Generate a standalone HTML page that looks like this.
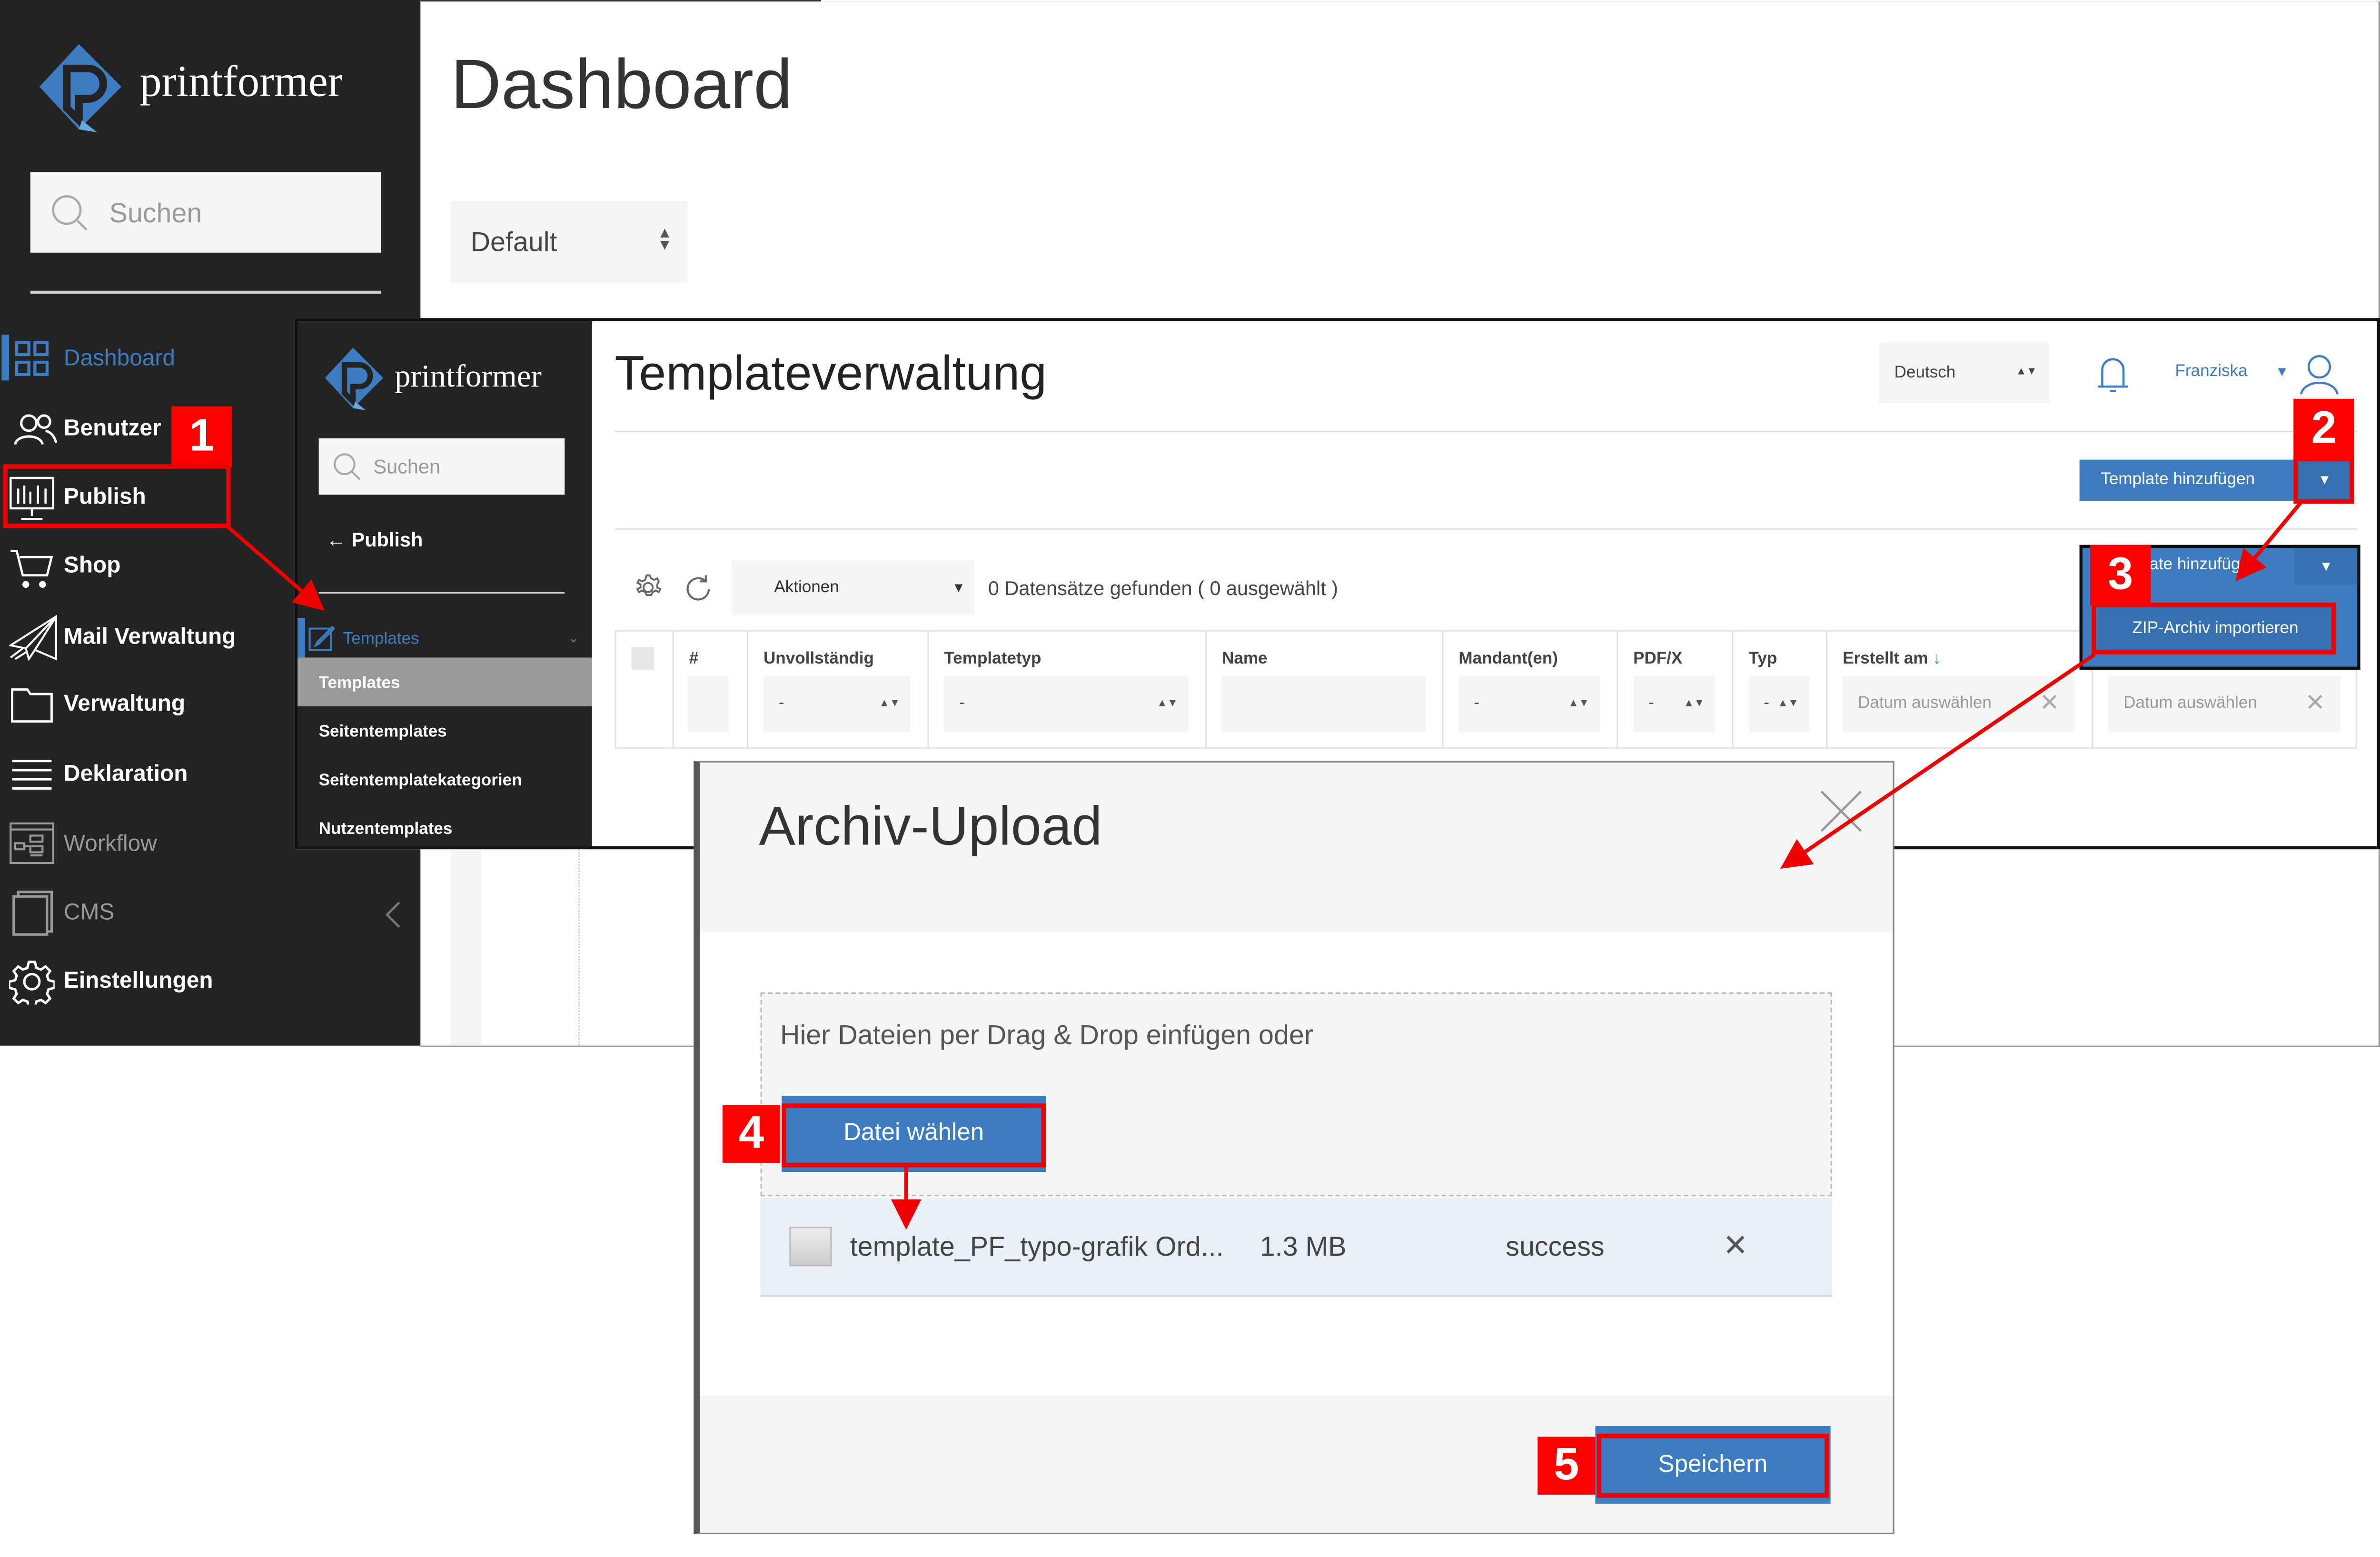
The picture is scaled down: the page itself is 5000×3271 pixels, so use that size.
<!DOCTYPE html>
<html><head><meta charset="utf-8"><style>
*{margin:0;padding:0;box-sizing:border-box}
html,body{width:5000px;height:3271px;overflow:hidden;background:#fff}
#s{position:absolute;left:0;top:0;width:1568px;height:1023px;transform:scale(3.1888,3.1975);transform-origin:0 0;font-family:"Liberation Sans",sans-serif;color:#333}
.a{position:absolute}
.dk{background:#232323}
.mi{position:absolute;left:42px;font-size:15px;font-weight:bold;color:#fff;line-height:20px}
.sm{position:absolute;left:210px;font-size:11px;font-weight:bold;color:#fff}
.lbl{position:absolute;background:#f00;color:#fff;font-weight:bold;font-size:30px;text-align:center;line-height:40px;width:40px;height:40px}
.rb{position:absolute;border:3px solid #e00}
.th{position:absolute;top:427px;font-size:11px;font-weight:bold;color:#444}
.fi{position:absolute;top:444px;height:37px;background:#f5f5f5;font-size:11px;color:#555;line-height:37px;padding-left:10px}
.blue{background:#3d7cc1;color:#fff}
</style></head><body><div id="s">
<!-- page 1 -->
<div class="a" style="left:277px;top:0;width:1291px;height:688px;border-right:1px solid #999;border-bottom:1px solid #999;border-top:1px solid #333"></div>
<div class="a" style="left:541px;top:0;width:1027px;height:1px;background:#fff"></div>
<div class="a dk" style="left:0;top:0;width:277px;height:687px"></div>
<svg class="a" style="left:24px;top:27px" width="60" height="62" viewBox="0 0 60 62"><path d="M28 2 L56 30 L28 58 L2 30 Z" fill="#3d7cc1"/><path d="M20 18 h14 a10 10 0 0 1 0 20 h-6 v14 l-8 -8z" fill="none" stroke="#222" stroke-width="5"/><path d="M30 52 l10 8 l-12 -2z" fill="#6aa6e0"/></svg>
<div class="a" style="left:92px;top:38px;font-family:'Liberation Serif',serif;font-size:29px;color:#fff">printformer</div>
<div class="a" style="left:20px;top:113px;width:231px;height:53px;background:#f5f5f5"></div>
<svg class="a" style="left:33px;top:127px" width="26" height="26"><circle cx="11" cy="11" r="9" fill="none" stroke="#aaa" stroke-width="1.5"/><path d="M18 18l6 6" stroke="#aaa" stroke-width="1.5"/></svg>
<div class="a" style="left:72px;top:130px;font-size:18px;color:#999">Suchen</div>
<div class="a" style="left:20px;top:191px;width:231px;height:2px;background:#ccc"></div>
<div class="a" style="left:1px;top:220px;width:5px;height:30px;background:#3d7cc1"></div>
<svg class="a" style="left:10px;top:224px" width="22" height="24"><g fill="none" stroke="#3d7cc1" stroke-width="2"><rect x="1" y="1" width="8" height="8"/><rect x="13" y="1" width="8" height="8"/><rect x="1" y="14" width="8" height="8"/><rect x="13" y="14" width="8" height="8"/></g></svg>
<div class="mi" style="top:226px;color:#3d7cc1;font-weight:normal">Dashboard</div>
<svg class="a" style="left:8px;top:270px" width="30" height="24" fill="none" stroke="#fff" stroke-width="1.6"><circle cx="11" cy="8" r="5"/><path d="M2 22c1-7 17-7 18 0"/><circle cx="21" cy="7" r="4"/><path d="M22 13c4 1 6 4 7 8"/></svg>
<div class="mi" style="top:272px">Benutzer</div>
<svg class="a" style="left:6px;top:313px" width="30" height="30" fill="none" stroke="#fff" stroke-width="1.4"><rect x="1" y="1" width="28" height="20"/><path d="M15 21v5M8 28h14M6 18v-10M10 18v-12M14 18v-8M19 18v-12M24 18v-10"/></svg>
<div class="mi" style="top:317px">Publish</div>
<svg class="a" style="left:6px;top:360px" width="30" height="28" fill="none" stroke="#fff" stroke-width="1.5"><path d="M1 2h4l4 16h16l3-12H7"/><circle cx="11" cy="24" r="1.5" fill="#fff"/><circle cx="22" cy="24" r="1.5" fill="#fff"/></svg>
<div class="mi" style="top:362px">Shop</div>
<svg class="a" style="left:6px;top:404px" width="32" height="30" fill="none" stroke="#fff" stroke-width="1.3"><path d="M31 1L1 20l10 2 2 7 4-6 14 6zM11 22L31 1M17 23L31 1M1 28l8-6M4 29l8-5"/></svg>
<div class="mi" style="top:409px">Mail Verwaltung</div>
<svg class="a" style="left:7px;top:451px" width="28" height="24" fill="none" stroke="#fff" stroke-width="1.5"><path d="M1 2h10l2 3h14v18H1z"/></svg>
<div class="mi" style="top:453px">Verwaltung</div>
<svg class="a" style="left:7px;top:497px" width="28" height="24" stroke="#fff" stroke-width="1.6"><path d="M1 3h26M1 9h26M1 15h26M1 21h26"/></svg>
<div class="mi" style="top:499px">Deklaration</div>
<svg class="a" style="left:6px;top:540px" width="30" height="28" fill="none" stroke="#999" stroke-width="1.3"><rect x="1" y="1" width="28" height="26"/><path d="M1 5h28M4 14h6v4H4zM14 9h8v4h-8zM14 16h8v4h-8zM14 22h8M10 16h4"/></svg>
<div class="mi" style="top:545px;color:#999;font-weight:normal">Workflow</div>
<svg class="a" style="left:8px;top:585px" width="28" height="30" fill="none" stroke="#999" stroke-width="1.6"><rect x="4" y="1" width="22" height="26"/><rect x="1" y="4" width="22" height="25" fill="#232323"/></svg>
<div class="mi" style="top:590px;color:#999;font-weight:normal">CMS</div>
<svg class="a" style="left:253px;top:592px" width="12" height="18" fill="none" stroke="#777" stroke-width="1.5"><path d="M10 1L2 9l8 8"/></svg>
<svg class="a" style="left:6px;top:630px" width="30" height="30" fill="none" stroke="#fff" stroke-width="1.6"><circle cx="15" cy="15" r="5"/><path d="M13 2h4l1 4 3 1 3-2 3 3-2 3 1 3 4 1v4l-4 1-1 3 2 3-3 3-3-2-3 1-1 4h-4l-1-4-3-1-3 2-3-3 2-3-1-3-4-1v-4l4-1 1-3-2-3 3-3 3 2 3-1z"/></svg>
<div class="mi" style="top:635px">Einstellungen</div>
<div class="lbl" style="left:113px;top:267px">1</div>
<div class="rb" style="left:2px;top:305px;width:150px;height:42px"></div>
<div class="a" style="left:297px;top:28px;font-size:46px;color:#333">Dashboard</div>
<div class="a" style="left:297px;top:132px;width:156px;height:54px;background:#f5f5f5"></div>
<div class="a" style="left:310px;top:149px;font-size:18px;color:#444">Default</div>
<div class="a" style="left:433px;top:150px;font-size:10px;line-height:8px;color:#555">▲<br>▼</div>
<div class="a" style="left:297px;top:557px;width:20px;height:130px;background:#f5f5f5"></div>
<div class="a" style="left:381px;top:557px;width:0;height:130px;border-left:1px dotted #ccc"></div>

<!-- page 2 -->
<div class="a" style="left:194px;top:209px;width:1374px;height:349px;background:#fff;border:2px solid #111"></div>
<div class="a dk" style="left:196px;top:211px;width:194px;height:345px"></div>
<svg class="a" style="left:212px;top:227px" width="44" height="44" viewBox="0 0 60 62"><path d="M28 2 L56 30 L28 58 L2 30 Z" fill="#3d7cc1"/><path d="M20 18 h14 a10 10 0 0 1 0 20 h-6 v14 l-8 -8z" fill="none" stroke="#222" stroke-width="5"/><path d="M30 52 l10 8 l-12 -2z" fill="#6aa6e0"/></svg>
<div class="a" style="left:260px;top:235px;font-family:'Liberation Serif',serif;font-size:21px;color:#fff">printformer</div>
<div class="a" style="left:210px;top:288px;width:162px;height:37px;background:#f5f5f5"></div>
<svg class="a" style="left:219px;top:297px" width="20" height="20"><circle cx="8" cy="8" r="6.5" fill="none" stroke="#aaa" stroke-width="1.3"/><path d="M13 13l5 5" stroke="#aaa" stroke-width="1.3"/></svg>
<div class="a" style="left:246px;top:299px;font-size:13px;color:#999">Suchen</div>
<div class="a" style="left:215px;top:347px;font-size:13px;font-weight:bold;color:#fff">← Publish</div>
<div class="a" style="left:210px;top:389px;width:162px;height:1px;background:#ccc"></div>
<div class="a" style="left:196px;top:406px;width:5px;height:26px;background:#3d7cc1"></div>
<svg class="a" style="left:203px;top:410px" width="18" height="18" fill="none" stroke="#3d7cc1" stroke-width="1.3"><rect x="1" y="3" width="14" height="14"/><path d="M6 12l10-10 1 1-10 10-2 1z"/></svg>
<div class="a" style="left:226px;top:414px;font-size:11px;color:#3d7cc1">Templates</div>
<div class="a" style="left:374px;top:414px;font-size:9px;color:#777">⌄</div>
<div class="a" style="left:196px;top:432px;width:194px;height:32px;background:#999"></div>
<div class="sm" style="top:443px">Templates</div>
<div class="sm" style="top:475px">Seitentemplates</div>
<div class="sm" style="top:507px">Seitentemplatekategorien</div>
<div class="sm" style="top:539px">Nutzentemplates</div>
<div class="a" style="left:405px;top:227px;font-size:32px;color:#222">Templateverwaltung</div>
<div class="a" style="left:1238px;top:225px;width:112px;height:40px;background:#f5f5f5;font-size:11px;line-height:40px;padding-left:10px;color:#444">Deutsch<span style="position:absolute;right:8px;top:0;font-size:7px">▲▼</span></div>
<svg class="a" style="left:1381px;top:232px" width="22" height="28" fill="none" stroke="#3d7cc1" stroke-width="1.4"><path d="M4 22V11a7 7 0 0 1 14 0v11zM1 22h20M9 25h4"/></svg>
<div class="a" style="left:1433px;top:238px;font-size:11px;color:#3d7cc1">Franziska</div>
<div class="a" style="left:1499px;top:239px;font-size:9px;color:#3d7cc1">▼</div>
<svg class="a" style="left:1515px;top:232px" width="26" height="28" fill="none" stroke="#3d7cc1" stroke-width="1.4"><circle cx="13" cy="9" r="7"/><path d="M1 27c2-10 22-10 24 0"/></svg>
<div class="a" style="left:405px;top:283px;width:1148px;height:1px;background:#e3e3e3"></div>
<div class="a blue" style="left:1370px;top:302px;width:180px;height:27px;font-size:11px;line-height:27px;padding-left:14px">Template hinzufügen</div>
<div class="a" style="left:1513px;top:302px;width:37px;height:27px;background:#3670b0;color:#fff;font-size:9px;text-align:center;line-height:27px">▼</div>
<div class="a" style="left:405px;top:347px;width:1148px;height:1px;background:#e3e3e3"></div>
<svg class="a" style="left:418px;top:377px" width="18" height="18" fill="none" stroke="#666" stroke-width="1.2"><circle cx="9" cy="9" r="3"/><path d="M8 1h2l1 2 2 1 2-1 1 2-1 2v2l2 1-1 2-2-1-2 1-1 2H8l-1-2-2-1-2 1-1-2 2-1V7L2 6l1-2 2 1 2-1z"/></svg>
<svg class="a" style="left:451px;top:377px" width="18" height="18" fill="none" stroke="#666" stroke-width="1.3"><path d="M14 5a7 7 0 1 0 2 5M14 1v4h-4"/></svg>
<div class="a" style="left:482px;top:368px;width:160px;height:36px;background:#f5f5f5;font-size:11px;line-height:36px;padding-left:28px;color:#333">Aktionen<span style="position:absolute;right:6px;font-size:9px">▼</span></div>
<div class="a" style="left:651px;top:379px;font-size:13px;color:#444">0 Datensätze gefunden ( 0 ausgewählt )</div>
<div class="a" style="left:405px;top:414px;width:1148px;height:78px;border:1px solid #e3e3e3"></div>
<div class="a" style="left:443px;top:414px;width:1px;height:78px;background:#e3e3e3"></div>
<div class="a" style="left:492px;top:414px;width:1px;height:78px;background:#e3e3e3"></div>
<div class="a" style="left:611px;top:414px;width:1px;height:78px;background:#e3e3e3"></div>
<div class="a" style="left:794px;top:414px;width:1px;height:78px;background:#e3e3e3"></div>
<div class="a" style="left:950px;top:414px;width:1px;height:78px;background:#e3e3e3"></div>
<div class="a" style="left:1065px;top:414px;width:1px;height:78px;background:#e3e3e3"></div>
<div class="a" style="left:1141px;top:414px;width:1px;height:78px;background:#e3e3e3"></div>
<div class="a" style="left:1203px;top:414px;width:1px;height:78px;background:#e3e3e3"></div>
<div class="a" style="left:1378px;top:414px;width:1px;height:78px;background:#e3e3e3"></div>
<div class="a" style="left:416px;top:425px;width:15px;height:15px;background:#e8e8e8"></div>
<div class="th" style="left:454px">#</div><div class="th" style="left:503px">Unvollständig</div><div class="th" style="left:622px">Templatetyp</div><div class="th" style="left:805px">Name</div><div class="th" style="left:961px">Mandant(en)</div><div class="th" style="left:1076px">PDF/X</div><div class="th" style="left:1152px">Typ</div><div class="th" style="left:1214px">Erstellt am <span style="color:#3d7cc1">↓</span></div>
<div class="fi" style="left:453px;width:27px"></div>
<div class="fi" style="left:503px;width:97px">-<span style="position:absolute;right:7px;font-size:7px">▲▼</span></div>
<div class="fi" style="left:622px;width:161px">-<span style="position:absolute;right:7px;font-size:7px">▲▼</span></div>
<div class="fi" style="left:805px;width:134px"></div>
<div class="fi" style="left:961px;width:93px">-<span style="position:absolute;right:7px;font-size:7px">▲▼</span></div>
<div class="fi" style="left:1076px;width:54px">-<span style="position:absolute;right:7px;font-size:7px">▲▼</span></div>
<div class="fi" style="left:1152px;width:40px">-<span style="position:absolute;right:7px;font-size:7px">▲▼</span></div>
<div class="fi" style="left:1214px;width:153px;color:#999">Datum auswählen<span style="position:absolute;right:10px;font-size:16px;color:#aaa">✕</span></div>
<div class="fi" style="left:1389px;width:153px;color:#999">Datum auswählen<span style="position:absolute;right:10px;font-size:16px;color:#aaa">✕</span></div>
<!-- dropdown -->
<div class="a blue" style="left:1370px;top:358px;width:185px;height:82px;border:2px solid #111"></div>
<div class="a" style="left:1416px;top:365px;font-size:11px;color:#fff">ate hinzufügen</div>
<div class="a" style="left:1512px;top:360px;width:41px;height:24px;background:#3670b0;color:#fff;font-size:9px;text-align:center;line-height:24px">▼</div>
<div class="a" style="left:1382px;top:398px;width:155px;height:30px;background:#3670b0;color:#fff;font-size:11px;text-align:center;line-height:30px">ZIP-Archiv importieren</div>
<div class="rb" style="left:1378px;top:396px;width:161px;height:34px"></div>
<div class="lbl" style="left:1377px;top:358px">3</div>
<div class="rb" style="left:1511px;top:300px;width:40px;height:31px"></div>
<div class="lbl" style="left:1511px;top:262px">2</div>

<!-- modal -->
<div class="a" style="left:457px;top:500px;width:791px;height:508px;background:#fff;border:1px solid #888;border-left:4px solid #555"></div>
<div class="a" style="left:461px;top:501px;width:786px;height:111px;background:#f5f5f5"></div>
<div class="a" style="left:500px;top:522px;font-size:36px;color:#333">Archiv-Upload</div>
<svg class="a" style="left:1199px;top:519px" width="28" height="28" stroke="#999" stroke-width="1.5"><path d="M1 1l26 26M27 1L1 27"/></svg>
<div class="a" style="left:501px;top:652px;width:706px;height:134px;background:#f5f5f5;border:1px dashed #bbb"></div>
<div class="a" style="left:514px;top:670px;font-size:18px;color:#555">Hier Dateien per Drag &amp; Drop einfügen oder</div>
<div class="a blue" style="left:515px;top:720px;width:174px;height:50px;font-size:16px;text-align:center;line-height:50px">Datei wählen</div>
<div class="rb" style="left:515px;top:725px;width:174px;height:42px"></div>
<div class="lbl" style="left:476px;top:726px;width:38px;height:38px;line-height:38px">4</div>
<div class="a" style="left:501px;top:787px;width:706px;height:65px;background:#e9eff7;border-bottom:1px solid #c5d2e2"></div>
<div class="a" style="left:520px;top:806px;width:28px;height:26px;background:linear-gradient(#eee,#ccc);border:1px solid #bbb"></div>
<div class="a" style="left:560px;top:809px;font-size:18px;color:#444">template_PF_typo-grafik Ord...</div>
<div class="a" style="left:830px;top:809px;font-size:18px;color:#444">1.3 MB</div>
<div class="a" style="left:992px;top:809px;font-size:18px;color:#444">success</div>
<div class="a" style="left:1135px;top:806px;font-size:20px;color:#555">✕</div>
<div class="a" style="left:461px;top:917px;width:786px;height:90px;background:#f5f5f5"></div>
<div class="a blue" style="left:1051px;top:937px;width:155px;height:51px;font-size:16px;text-align:center;line-height:51px">Speichern</div>
<div class="rb" style="left:1052px;top:942px;width:153px;height:42px"></div>
<div class="lbl" style="left:1013px;top:944px;width:38px;height:38px;line-height:38px">5</div>

<!-- arrows -->
<svg class="a" style="left:0;top:0" width="1568" height="1023" fill="none" stroke="#e00" stroke-width="2.5">
<defs><marker id="m" markerWidth="8" markerHeight="8" refX="6" refY="4" orient="auto"><path d="M0 0L8 4L0 8z" fill="#e00" stroke="none"/></marker></defs>
<path d="M150 346L210 398" marker-end="url(#m)"/>
<path d="M1516 330L1476 378" marker-end="url(#m)"/>
<path d="M1380 430L1177 568" marker-end="url(#m)"/>
<path d="M597 767L597 803" marker-end="url(#m)"/>
</svg>
</div></body></html>
